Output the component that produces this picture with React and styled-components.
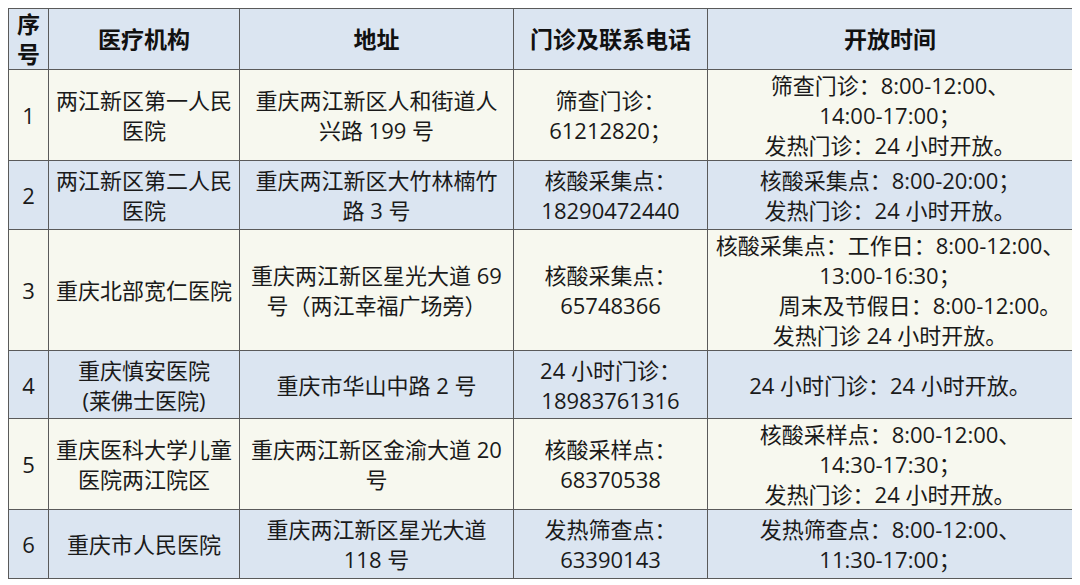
import React from 'react'
import styled, { createGlobalStyle } from 'styled-components'

const GlobalStyle = createGlobalStyle`
    body {
        margin: 8px;
        background: #ffffff;
        font-family: "Open Sans", "Noto Sans CJK SC", sans-serif;
        color: #1a1a1a;
    }
`

const columns = [
    { title: ['序', '号'], width: 40 },
    { title: ['医疗机构'], width: 191 },
    { title: ['地址'], width: 274 },
    { title: ['门诊及联系电话'], width: 194 },
    { title: ['开放时间'], width: 365 },
]

const rows = [
    {
        height: 91,
        cells: [
            ['1'],
            ['两江新区第一人民', '医院'],
            ['重庆两江新区人和街道人', '兴路 199 号'],
            ['筛查门诊：', '61212820；'],
            ['筛查门诊：8:00-12:00、', '14:00-17:00；', '发热门诊：24 小时开放。'],
        ],
    },
    {
        height: 69,
        cells: [
            ['2'],
            ['两江新区第二人民', '医院'],
            ['重庆两江新区大竹林楠竹', '路 3 号'],
            ['核酸采集点：', '18290472440'],
            ['核酸采集点：8:00-20:00；', '发热门诊：24 小时开放。'],
        ],
    },
    {
        height: 120,
        cells: [
            ['3'],
            ['重庆北部宽仁医院'],
            ['重庆两江新区星光大道 69', '号（两江幸福广场旁）'],
            ['核酸采集点：', '65748366'],
            [
                '核酸采集点：工作日：8:00-12:00、',
                '13:00-16:30；',
                { text: '周末及节假日：8:00-12:00。', indent: 60 },
                '发热门诊 24 小时开放。',
            ],
        ],
    },
    {
        height: 68,
        cells: [
            ['4'],
            ['重庆慎安医院', '(莱佛士医院)'],
            ['重庆市华山中路 2 号'],
            ['24 小时门诊：', '18983761316'],
            ['24 小时门诊：24 小时开放。'],
        ],
    },
    {
        height: 89,
        cells: [
            ['5'],
            ['重庆医科大学儿童', '医院两江院区'],
            ['重庆两江新区金渝大道 20', '号'],
            ['核酸采样点：', '68370538'],
            ['核酸采样点：8:00-12:00、', '14:30-17:30；', '发热门诊：24 小时开放。'],
        ],
    },
    {
        height: 69,
        cells: [
            ['6'],
            ['重庆市人民医院'],
            ['重庆两江新区星光大道', '118 号'],
            ['发热筛查点：', '63390143'],
            ['发热筛查点：8:00-12:00、', '11:30-17:00；'],
        ],
    },
]

const renderLines = (lines) =>
    lines.map((line, i) =>
        typeof line === 'string' ? (
            <Line key={i}>{line}</Line>
        ) : (
            <Line key={i} $indent={line.indent}>{line.text}</Line>
        )
    )

export default function App() {
    return (
        <>
            <GlobalStyle />
            <Table>
                <colgroup>
                    {columns.map((c, i) => (
                        <col key={i} style={{ width: c.width }} />
                    ))}
                </colgroup>
                <thead>
                    <HeadRow>
                        {columns.map((c, i) => (
                            <HeadCell key={i} $narrow={i === 0}>
                                {renderLines(c.title)}
                            </HeadCell>
                        ))}
                    </HeadRow>
                </thead>
                <tbody>
                    {rows.map((row, r) => (
                        <BodyRow key={r} $striped={r % 2 === 1} style={{ height: row.height }}>
                            {row.cells.map((cell, i) => (
                                <Cell key={i} $narrow={i === 0}>
                                    {renderLines(cell)}
                                </Cell>
                            ))}
                        </BodyRow>
                    ))}
                </tbody>
            </Table>
        </>
    )
}

const Table = styled.table`
    width: 1064px;
    table-layout: fixed;
    border-collapse: collapse;
    border: 1px solid #5a5a5a;
`

const HeadRow = styled.tr`
    height: 61px;
    background: #dbe5f1;
`

const BodyRow = styled.tr`
    background: ${(p) => (p.$striped ? '#dbe5f1' : '#f7f8ef')};
`

const HeadCell = styled.th`
    border: 1px solid #5a5a5a;
    padding: ${(p) => (p.$narrow ? '0' : '0 4px')};
    text-align: center;
    vertical-align: middle;
    font-size: 23px;
    font-weight: 700;
    line-height: 30px;
    color: #111111;
`

const Cell = styled.td`
    border: 1px solid #5a5a5a;
    padding: ${(p) => (p.$narrow ? '0' : '0 4px')};
    text-align: center;
    vertical-align: middle;
    font-size: 22px;
    line-height: 30px;
`

const Line = styled.span`
    display: block;
    white-space: nowrap;
    padding-left: ${(p) => (p.$indent ? `${p.$indent}px` : '0')};
`
